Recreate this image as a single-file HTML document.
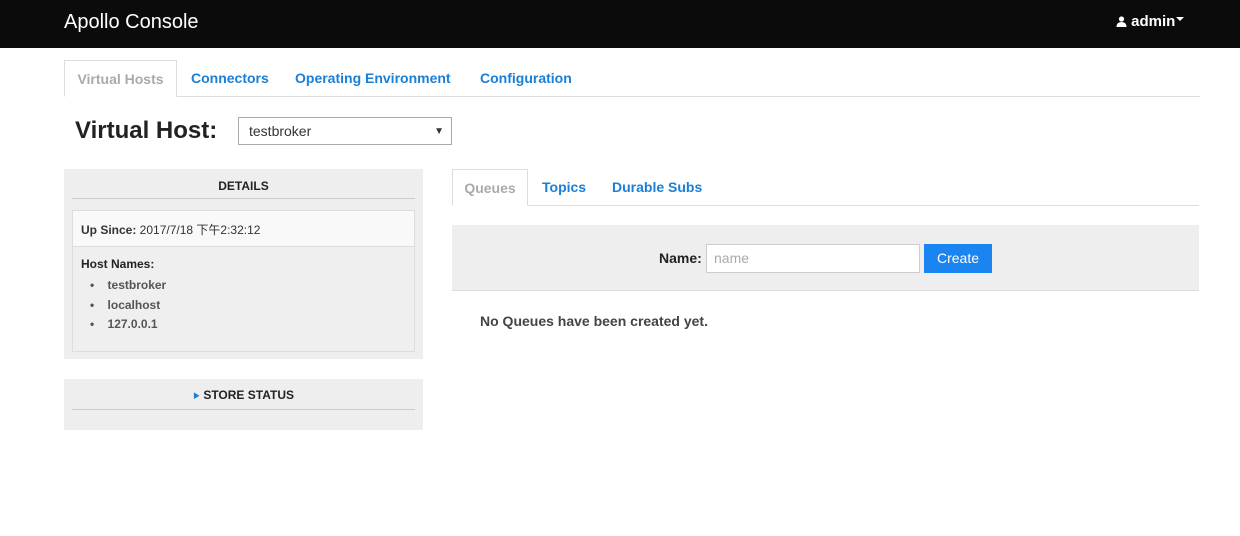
<!DOCTYPE html>
<html><head><style>
*{box-sizing:border-box;margin:0;padding:0}
body{width:1240px;height:536px;background:#fff;font-family:"Liberation Sans","Noto Sans CJK SC",sans-serif;position:relative;overflow:hidden;color:#333}
.abs{position:absolute}
.top{left:0;top:0;width:1240px;height:48px;background:#0b0b0b}
.b{font-weight:bold}
a{color:#1a7fd6;text-decoration:none}
</style></head><body>
<div class="abs top"></div>
<div class="abs" style="left:64px;top:11px;font-size:20px;color:#fff">Apollo Console</div>
<div class="abs b" style="left:1116px;top:13px;font-size:15px;color:#fff">
<svg width="11" height="11" viewBox="0 0 11 11" style="vertical-align:-1px"><circle cx="5.5" cy="3" r="2.6" fill="#fff"/><path d="M0.5 11 Q0.5 6 5.5 6 Q10.5 6 10.5 11Z" fill="#fff"/></svg> admin<svg width="9" height="6" viewBox="0 0 9 6" style="vertical-align:3px;margin-left:1px"><path d="M0 0H8L4 4Z" fill="#fff"/></svg></div>

<div class="abs" style="left:64px;top:96px;width:1136px;height:1px;background:#ddd"></div>
<div class="abs b" style="left:64px;top:60px;width:113px;height:37px;border:1px solid #ddd;border-bottom-color:#fff;background:#fff;color:#aaa;font-size:14px;text-align:center;line-height:36px">Virtual Hosts</div>
<a class="abs b" style="left:191px;top:70px;font-size:14px">Connectors</a>
<a class="abs b" style="left:295px;top:70px;font-size:14px">Operating Environment</a>
<a class="abs b" style="left:480px;top:70px;font-size:14px">Configuration</a>

<div class="abs b" style="left:75px;top:117px;font-size:24px;color:#222">Virtual Host:</div>
<div class="abs" style="left:238px;top:117px;width:214px;height:28px;border:1px solid #aaa;font-size:14px;line-height:26px;padding-left:10px;color:#333">testbroker<span style="position:absolute;right:7px;top:1px;font-size:10px">▼</span></div>

<div class="abs" style="left:64px;top:169px;width:359px;height:190px;background:#eee"></div>
<div class="abs b" style="left:64px;top:179px;width:359px;text-align:center;font-size:12px;color:#222">DETAILS</div>
<div class="abs" style="left:72px;top:198px;width:343px;height:1px;background:#ccc"></div>
<div class="abs" style="left:72px;top:210px;width:343px;height:142px;border:1px solid #ddd;background:#efefef"></div>
<div class="abs" style="left:73px;top:211px;width:341px;height:36px;background:#f9f9f9;border-bottom:1px solid #ddd"></div>
<div class="abs" style="left:81px;top:221px;font-size:12px;color:#333"><b>Up Since:</b> 2017/7/18 下午2:32:12</div>
<div class="abs b" style="left:81px;top:257px;font-size:12px;color:#222">Host Names:</div>
<div class="abs b" style="left:90px;top:276px;font-size:12px;color:#555;line-height:19.5px">•&nbsp;&nbsp;&nbsp;&nbsp;testbroker<br>•&nbsp;&nbsp;&nbsp;&nbsp;localhost<br>•&nbsp;&nbsp;&nbsp;&nbsp;127.0.0.1</div>

<div class="abs" style="left:64px;top:379px;width:359px;height:51px;background:#eee"></div>
<div class="abs b" style="left:64px;top:388px;width:359px;text-align:center;font-size:12px;color:#222"><span style="color:#1a7fd6;font-size:7px;vertical-align:1px">▶</span> STORE STATUS</div>
<div class="abs" style="left:72px;top:409px;width:343px;height:1px;background:#ccc"></div>

<div class="abs" style="left:452px;top:205px;width:747px;height:1px;background:#ddd"></div>
<div class="abs b" style="left:452px;top:169px;width:76px;height:37px;border:1px solid #ddd;border-bottom-color:#fff;background:#fff;color:#aaa;font-size:14px;text-align:center;line-height:36px">Queues</div>
<a class="abs b" style="left:542px;top:179px;font-size:14px">Topics</a>
<a class="abs b" style="left:612px;top:179px;font-size:14px">Durable Subs</a>

<div class="abs" style="left:452px;top:225px;width:747px;height:66px;background:#eee;border-bottom:1px solid #ddd"></div>
<div class="abs b" style="left:659px;top:250px;font-size:14px;color:#222">Name:</div>
<div class="abs" style="left:706px;top:244px;width:214px;height:29px;border:1px solid #ccc;background:#fff;font-size:14px;color:#aaa;padding-left:7px;line-height:27px">name</div>
<div class="abs" style="left:924px;top:244px;width:68px;height:29px;background:#1a84f0;color:#fff;font-size:14px;text-align:center;line-height:29px">Create</div>
<div class="abs b" style="left:480px;top:313px;font-size:14px;color:#444">No Queues have been created yet.</div>
</body></html>
